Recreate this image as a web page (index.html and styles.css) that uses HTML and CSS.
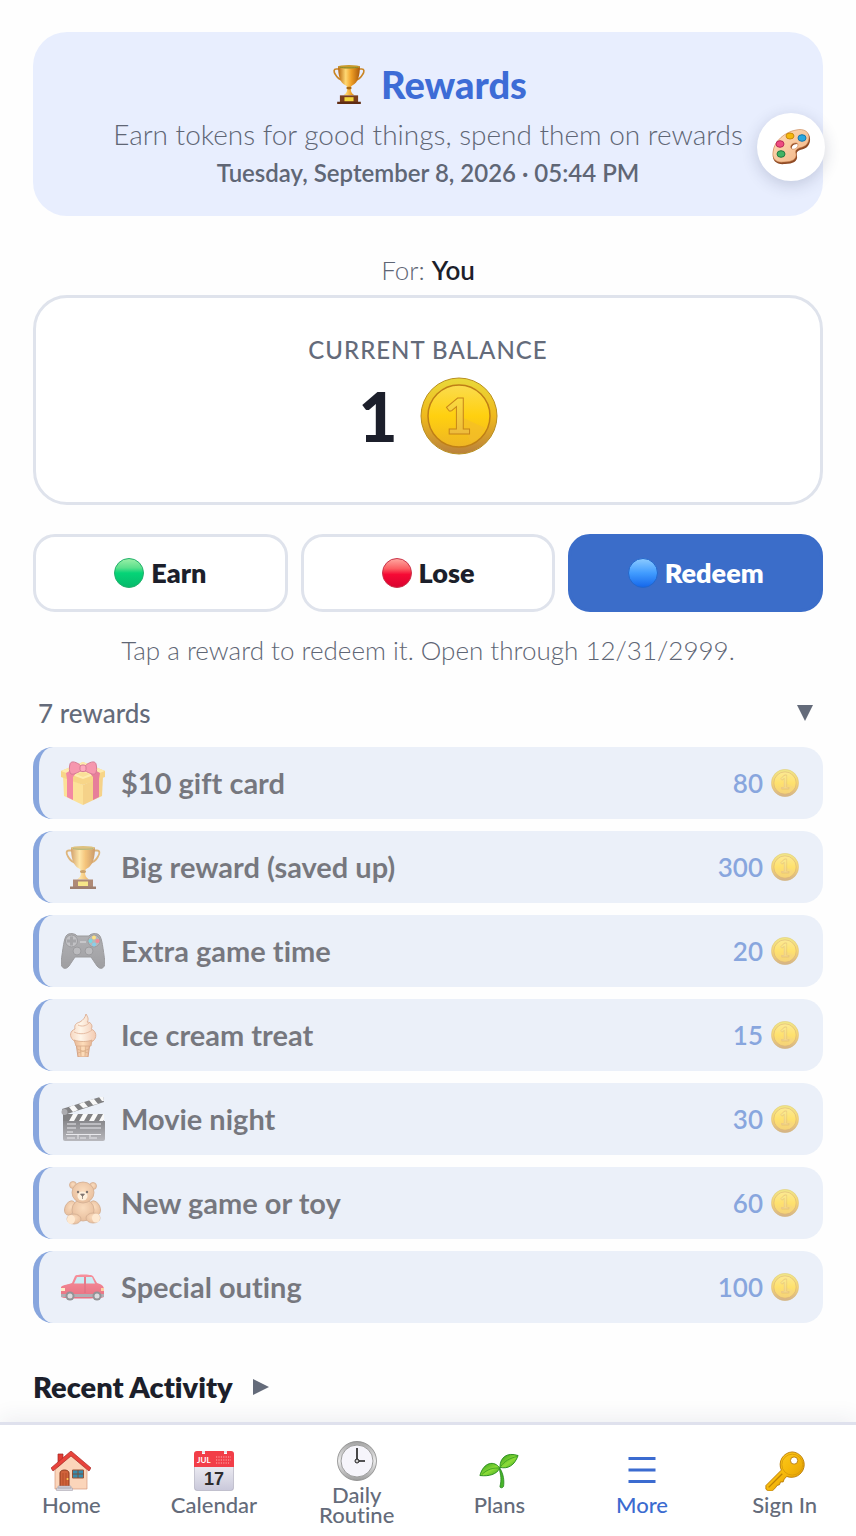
FILE: index.html
```html
<!DOCTYPE html>
<html lang="en">

<head>
    <meta charset="UTF-8">
    <meta name="viewport" content="width=device-width, initial-scale=1.0">
    <title>Rewards</title>
    <link rel="stylesheet" href="styles.css">
</head>

<body>
    <!-- shared icons -->
    <svg class="sprite" width="0" height="0" aria-hidden="true">
        <defs>
            <linearGradient id="gold" x1="0" y1="0" x2="1" y2="0">
                <stop offset="0" stop-color="#b8660c" />
                <stop offset=".35" stop-color="#ffd873" />
                <stop offset=".6" stop-color="#f0a026" />
                <stop offset="1" stop-color="#a9590a" />
            </linearGradient>
            <linearGradient id="coinRim" x1="0" y1="0" x2="0" y2="1">
                <stop offset="0" stop-color="#e9d93a" />
                <stop offset=".5" stop-color="#f0b91c" />
                <stop offset="1" stop-color="#b9803c" />
            </linearGradient>
            <linearGradient id="coinFace" x1="0" y1="0" x2="0" y2="1">
                <stop offset="0" stop-color="#fbdc4e" />
                <stop offset=".5" stop-color="#ffd00f" />
                <stop offset="1" stop-color="#eeb524" />
            </linearGradient>
            <linearGradient id="coinOne" x1="0" y1="0" x2="0" y2="1">
                <stop offset="0" stop-color="#ffe640" />
                <stop offset="1" stop-color="#e9b13a" />
            </linearGradient>
            <linearGradient id="green" x1="0" y1="0" x2="0" y2="1">
                <stop offset="0" stop-color="#9df0a8" />
                <stop offset=".32" stop-color="#5be08c" />
                <stop offset=".5" stop-color="#05d477" />
                <stop offset="1" stop-color="#06b96b" />
            </linearGradient>
            <linearGradient id="red" x1="0" y1="0" x2="0" y2="1">
                <stop offset="0" stop-color="#ffaaa2" />
                <stop offset=".35" stop-color="#fb5e62" />
                <stop offset=".55" stop-color="#f60a35" />
                <stop offset="1" stop-color="#d9022f" />
            </linearGradient>
            <linearGradient id="blue" x1="0" y1="0" x2="0" y2="1">
                <stop offset="0" stop-color="#8ccbff" />
                <stop offset=".5" stop-color="#419cff" />
                <stop offset="1" stop-color="#1466ea" />
            </linearGradient>
            <linearGradient id="pad" x1="0" y1="0" x2="0" y2="1">
                <stop offset="0" stop-color="#7f7f84" />
                <stop offset="1" stop-color="#606065" />
            </linearGradient>
            <linearGradient id="cream" x1="0" y1="0" x2="1" y2="0">
                <stop offset="0" stop-color="#f4c09a" />
                <stop offset=".4" stop-color="#fff0dc" />
                <stop offset="1" stop-color="#eeaa80" />
            </linearGradient>
            <linearGradient id="cone" x1="0" y1="0" x2="1" y2="0">
                <stop offset="0" stop-color="#d98953" />
                <stop offset=".5" stop-color="#ffc98f" />
                <stop offset="1" stop-color="#d5824d" />
            </linearGradient>
            <linearGradient id="slate" x1="0" y1="0" x2="0" y2="1">
                <stop offset="0" stop-color="#3c3c42" />
                <stop offset="1" stop-color="#8a8a93" />
            </linearGradient>
            <radialGradient id="fur" cx=".5" cy=".4" r=".7">
                <stop offset="0" stop-color="#f9c795" />
                <stop offset="1" stop-color="#d58d55" />
            </radialGradient>
            <linearGradient id="carBody" x1="0" y1="0" x2="0" y2="1">
                <stop offset="0" stop-color="#f4485c" />
                <stop offset="1" stop-color="#d9142f" />
            </linearGradient>
            <linearGradient id="paper" x1="0" y1="0" x2="0" y2="1">
                <stop offset="0" stop-color="#ffffff" />
                <stop offset="1" stop-color="#c9c8da" />
            </linearGradient>
            <linearGradient id="steel" x1="0" y1="0" x2="0" y2="1">
                <stop offset="0" stop-color="#a2a2a2" />
                <stop offset=".5" stop-color="#ececec" />
                <stop offset="1" stop-color="#9c9c9c" />
            </linearGradient>
            <linearGradient id="leaf" x1="0" y1="0" x2="1" y2="1">
                <stop offset="0" stop-color="#2d9a1a" />
                <stop offset=".55" stop-color="#8ddc38" />
                <stop offset="1" stop-color="#37a31e" />
            </linearGradient>
            <linearGradient id="keyGold" x1="0" y1="0" x2="1" y2="1">
                <stop offset="0" stop-color="#ffd42a" />
                <stop offset=".5" stop-color="#f6b90b" />
                <stop offset="1" stop-color="#d99300" />
            </linearGradient>
            <linearGradient id="wood" x1="0" y1="0" x2="1" y2="1">
                <stop offset="0" stop-color="#ffdfba" />
                <stop offset="1" stop-color="#f2b283" />
            </linearGradient>
        </defs>

        <symbol id="trophy" viewBox="0 0 44 44">
            <path d="M12 5.500H8c-3 0-3 3-1 6 2 4 5 6 9 6.500M32 5.500h4c3 0 3 3 1 6-2 4-5 6-9 6.500" fill="none" stroke="#c98526" stroke-width="1.800" />
            <path d="M10 2.500h24c0 10-2 18-8 21-2 1-2 2-2 4 0 3 1 5 4 7H16c3-2 4-4 4-7 0-2 0-3-2-4-6-3-8-11-8-21z" fill="url(#gold)" />
            <ellipse cx="22" cy="3" rx="12" ry="2" fill="#c99a2c" />
            <path d="M12 3.500c3 1 17 1 20 0" stroke="#7e8a2d" fill="none" />
            <ellipse cx="22" cy="26.500" rx="3" ry="1.500" fill="#a8670f" />
            <path d="M12 34.500h20V42H12z" fill="#7a3d1c" />
            <path d="M17 36.500h10v4.500H17z" fill="#f2d53a" />
            <path d="M9 41.500h26v2.500H9z" fill="#5f2c12" />
        </symbol>

        <symbol id="coin" viewBox="0 0 78 78">
            <circle cx="39" cy="39" r="38" fill="url(#coinRim)" stroke="#b98f1f" />
            <circle cx="39" cy="39" r="31" fill="url(#coinFace)" stroke="#bf7f16" stroke-width="1.500" />
            <path d="M39 39l26 12a29 29 0 0 1-14 15z" fill="#f3bd2c" opacity=".6" />
        </symbol>

        <symbol id="gift" viewBox="0 0 44 44">
            <path d="M2 15l20 9v20L3 35z" fill="#fbcf55" />
            <path d="M42 15l-20 9v20l19-9z" fill="#f0b53c" />
            <path d="M0 10L22 1l22 9v6l-22 8L0 16z" fill="#f3bb3b" />
            <path d="M0 10L22 1l22 9-22 8z" fill="#ffe07a" />
            <path d="M15 13l7-2 7 2-7 3z" fill="#f9cd55" />
            <path d="M5 12l7-4 4 3-4 5v23l-6-3V18z" fill="#ec3a66" />
            <path d="M39 12l-7-4-4 3 4 5v23l6-3V18z" fill="#d92a58" />
            <path d="M22 7C17 1 10-1 9 3c-1 4-1 8 1 10 3 1 7-2 12-4 5 2 9 5 12 4 2-2 2-6 1-10-1-4-8-2-13 4z" fill="#f2537a" stroke="#bd2550" />
            <rect x="19" y="4" width="6" height="6.500" rx="2" fill="#ff7292" stroke="#bd2550" />
        </symbol>

        <symbol id="gamepad" viewBox="0 0 44 44">
            <path d="M6 6c2-2 8-2 10 1h12c2-3 8-3 10-1 3 2 4 14 6 27 0 7-5 8-8 4l-6-9H14l-6 9c-3 4-8 3-8-4C2 20 3 8 6 6z" fill="url(#pad)" stroke="#5a5a5f" />
            <circle cx="10.500" cy="12" r="6" fill="#99999e" stroke="#5b5b60" />
            <path d="M9 7.500h3v3h3v3h-3v3H9v-3H6v-3h3z" fill="#6b6b70" />
            <circle cx="33" cy="12" r="6" fill="#88888d" stroke="#5b5b60" />
            <circle cx="33" cy="8.500" r="2" fill="#ffd12e" />
            <circle cx="29.500" cy="12" r="2" fill="#1fc0d0" />
            <circle cx="36.500" cy="12" r="2" fill="#ef3f4f" />
            <circle cx="33" cy="15.500" r="2" fill="#39b3de" />
            <circle cx="16" cy="22" r="4" fill="#8f8f94" stroke="#5b5b60" />
            <circle cx="28" cy="22" r="4" fill="#8f8f94" stroke="#5b5b60" />
            <path d="M19 12h6v2h-6z" fill="#a1a1a6" />
        </symbol>

        <symbol id="icecream" viewBox="0 0 44 44">
            <path d="M15 30h14l-2 14H17z" fill="url(#cone)" stroke="#b8683a" />
            <path d="M19 31l1 12M25 31l-1 12M16 36l11 4M28 36l-11 4" fill="none" stroke="#c47b3b" stroke-width=".8" />
            <path d="M25 1c2 3 3 6 1 8 5 0 6 5 4 7 6 2 6 9 2 12-4 2-16 2-20-1-4-4-3-9 2-11-1-4 1-6 5-7 3-2 5-4 6-8z" fill="url(#cream)" stroke="#cb8259" />
            <path d="M17 12c4 2 8 1 11-2M13 19c6 3 13 2 18-2" fill="none" stroke="#d79268" />
            <path d="M13 27c6 2 13 2 18 0l-1 6H15z" fill="url(#cone)" stroke="#c1743e" stroke-width=".8" />
        </symbol>

        <symbol id="clapper" viewBox="0 0 44 44">
            <path d="M1 12L42-1l1 6L3 18z" fill="#303034" />
            <path d="M8 10l5-2 4 5-5 2zM18 7l5-2 4 5-5 1zM28 3l5-1 4 5-5 1zM38 0l4-1 1 5-2 0z" fill="#f7f7f7" />
            <path d="M2 17h41v7H2z" fill="#303034" />
            <path d="M12 17h5l-4 7H8zM22 17h5l-4 7h-5zM32 17h5l-4 7h-5zM42 17h1v6l-1 1h-4z" fill="#f7f7f7" />
            <path d="M2 24h42v18a2 2 0 0 1-2 2H4a2 2 0 0 1-2-2z" fill="url(#slate)" />
            <path d="M6 27h9M6 31h9M6 35h6M19 27h21M19 31h21M5 37.500h35M6 41h8M19 41h6M30 41h6M17 38v4M29 38v4" stroke="#dcdce2" stroke-width="1" />
            <circle cx="3.500" cy="15" r="3" fill="#77777d" />
        </symbol>

        <symbol id="teddy" viewBox="0 0 44 44">
            <g fill="url(#fur)" stroke="#b77a4b" stroke-width=".8">
                <circle cx="12" cy="4" r="3.500" />
                <circle cx="32" cy="5" r="3.500" />
                <ellipse cx="9" cy="27" rx="5" ry="7.500" transform="rotate(25 9 27)" />
                <ellipse cx="34" cy="27" rx="5" ry="7.500" transform="rotate(-25 34 27)" />
                <ellipse cx="22" cy="29" rx="11" ry="11" />
                <ellipse cx="22" cy="11.500" rx="11" ry="10.500" />
                <ellipse cx="13" cy="38" rx="7" ry="5" />
                <ellipse cx="32" cy="37" rx="7" ry="5" />
            </g>
            <ellipse cx="10" cy="38.500" rx="4" ry="4.500" fill="#ffdcb4" />
            <ellipse cx="35" cy="37" rx="4" ry="4.500" fill="#ffdcb4" />
            <ellipse cx="21.500" cy="15" rx="5" ry="4.500" fill="#ffe7c8" />
            <circle cx="17" cy="11" r="1.200" fill="#2b1a12" />
            <circle cx="26" cy="11" r="1.200" fill="#2b1a12" />
            <path d="M19.500 13h4l-2 2.500zM21.500 15v3" fill="#2b1a12" stroke="#2b1a12" stroke-width=".7" />
        </symbol>

        <symbol id="car" viewBox="0 0 44 44">
            <path d="M0 22c3-3 7-2 11-4l3-7c1-2 16-2 18 0l4 7c4 1 7 3 7 6v8c-2 2-41 2-43 0z" fill="url(#carBody)" />
            <path d="M13 18.500l3-6.500h7v6.500zM25 12h6l3 6.500h-9z" fill="#a9e3f0" />
            <path d="M24 12v16" stroke="#b80d29" stroke-width=".8" />
            <path d="M0 23h4v3H0z" fill="#ffe5a5" />
            <path d="M40 23h3v3h-3z" fill="#ffb36b" />
            <path d="M0 29h43v3H0z" fill="#7e7882" />
            <circle cx="9" cy="31" r="4.500" fill="#4d4d52" />
            <circle cx="9" cy="31" r="2.500" fill="#c7c7cc" />
            <circle cx="36" cy="31" r="4.500" fill="#4d4d52" />
            <circle cx="36" cy="31" r="2.500" fill="#c7c7cc" />
        </symbol>

        <symbol id="palette" viewBox="0 0 40 40">
            <path d="M25 4c8-2 15 2 14 10-1 6-5 8-10 9-3 1-4 3-3 6 1 5-4 8-12 8-8 1-13-3-12-10C3 15 14 6 25 4zm1 13c-4 0-6 3-5 5 2 3 7 0 7-3 0-1-1-2-2-2z" fill="#8f4a24" fill-rule="evenodd" />
            <path d="M25 3c8-2 14 2 13 9-1 6-5 8-10 9-3 1-4 3-3 6 1 5-4 8-12 8-8 1-12-3-11-10C3 14 14 5 25 3zm0 13c-4 0-6 3-5 5 2 3 7 0 7-3 0-1-1-2-2-2z" fill="url(#wood)" fill-rule="evenodd" stroke="#c67d4b" stroke-width=".6" />
            <ellipse cx="19" cy="9" rx="4" ry="3" fill="#f5b80c" stroke="#c98a0b" />
            <ellipse cx="31" cy="11" rx="4" ry="3.300" fill="#2ba7de" stroke="#1577ad" />
            <ellipse cx="9" cy="17" rx="4" ry="3.300" fill="#ee4c81" stroke="#bb2859" />
            <ellipse cx="10" cy="27" rx="4" ry="3.300" fill="#42b364" stroke="#237a40" />
        </symbol>

        <symbol id="home" viewBox="0 0 40 40">
            <path d="M7 3h5v9l-5 5z" fill="#e23b33" stroke="#a12722" stroke-width=".7" />
            <path d="M20 4l16 15v19H4V19z" fill="#fbd5ba" stroke="#d59a7c" stroke-width=".7" />
            <path d="M20 0l20 17-2 3L20 5 2 20l-2-3z" fill="#e8433b" stroke="#a92b26" stroke-width=".7" />
            <path d="M9 36V22c0-4 9-4 9 0v14z" fill="#d0623b" stroke="#8d3a1e" />
            <path d="M12 22v13M15 22v13" stroke="#a94723" stroke-width=".7" />
            <circle cx="16.500" cy="28" r="1" fill="#ffd257" />
            <path d="M21.500 19h11v8h-11z" fill="#388bac" stroke="#9b5436" />
            <path d="M27 19v8M21 23h12" stroke="#76533f" />
            <path d="M7 35h13v2H7zM5.500 37h16v2.500h-16z" fill="#d8d6de" stroke="#9e9ba6" stroke-width=".5" />
        </symbol>

        <symbol id="clock" viewBox="0 0 40 40">
            <circle cx="20" cy="20" r="19.500" fill="url(#steel)" stroke="#888" stroke-width=".8" />
            <circle cx="20" cy="20" r="16" fill="#f6f5fb" stroke="#9d9d9d" />
            <path d="M20 7v13h8" fill="none" stroke="#1e1e1e" stroke-width="1.600" />
            <circle cx="20" cy="20" r="2" fill="#ccc" stroke="#1e1e1e" />
        </symbol>

        <symbol id="sprout" viewBox="0 0 44 40">
            <path d="M23 17c4 6 5 14 4 20-1 2-4 2-4 0 2-7 1-13-1-20z" fill="#47b52a" stroke="#1f7f16" stroke-width=".8" />
            <path d="M23 17C17 8 5 10 1 25c10 1 18-1 22-8z" fill="url(#leaf)" stroke="#238a18" />
            <path d="M23 16C23 5 31-1 43 3c-4 11-11 15-20 13z" fill="url(#leaf)" stroke="#238a18" />
            <path d="M3 24c6-6 13-8 20-7M24 15c4-6 10-9 18-11" fill="none" stroke="#2f961e" stroke-width=".8" />
        </symbol>

        <symbol id="menu" viewBox="0 0 40 40">
            <path d="M6.500 7.500h27M6.500 19h27M6.500 30.500h27" stroke="#3b6bd0" stroke-width="3" />
        </symbol>

        <symbol id="key" viewBox="0 0 44 44">
            <path d="M30 1a14 14 0 1 1-6 27l-3 3-1 3-3 0-1 3-3 1-1 2-3 3c-2 2-6 1-8-1v-4l17-17A14 14 0 0 1 30 1zm2 5.500a4 4 0 1 0 0 8 4 4 0 0 0 0-8z" fill="url(#keyGold)" fill-rule="evenodd" stroke="#b87b05" />
            <path d="M19 25L4 40" stroke="#bd8206" stroke-width="1.500" />
            <circle cx="30" cy="15" r="11.500" fill="none" stroke="#d99c08" />
        </symbol>
    </svg>

    <button class="theme-btn" aria-label="Change theme"><svg class="icon-md"><use href="#palette" /></svg></button>

    <main class="page">
        <header class="hero">
            <h1><svg class="icon-md" aria-hidden="true"><use href="#trophy" /></svg>Rewards</h1>
            <p class="tagline">Earn tokens for good things, spend them on rewards</p>
            <p class="today">Tuesday, September 8, 2026 · 05:44 PM</p>
        </header>

        <p class="for-line">For: <strong>You</strong></p>
        <section class="balance">
            <h2>Current balance</h2>
            <div class="amount">1 <svg class="coin" viewBox="0 0 78 78" aria-hidden="true"><use href="#coin" /><text x="38" y="57">1</text></svg></div>
        </section>

        <div class="modes">
            <button><svg class="dot" viewBox="0 0 30 30" aria-hidden="true"><circle cx="15" cy="15" r="14.500" fill="url(#green)" stroke="#23b06c" /></svg>Earn</button>
            <button><svg class="dot" viewBox="0 0 30 30" aria-hidden="true"><circle cx="15" cy="15" r="14.500" fill="url(#red)" stroke="#c9364c" /></svg>Lose</button>
            <button class="active"><svg class="dot" viewBox="0 0 30 30" aria-hidden="true"><circle cx="15" cy="15" r="14.500" fill="url(#blue)" stroke="#2467cb" /></svg>Redeem</button>
        </div>
        <p class="hint">Tap a reward to redeem it. Open through 12/31/2999.</p>

        <details class="rewards" open>
            <summary>7 rewards <svg class="arrow" viewBox="0 0 16 16" aria-hidden="true"><path d="M0 0h16L8 16z" /></svg></summary>
            <div class="reward-list">
                <button class="reward" disabled><svg class="icon-lg"><use href="#gift" /></svg><span class="name">$10 gift card</span><span class="cost">80 <svg class="coin" viewBox="0 0 78 78"><use href="#coin" /><text x="38" y="57">1</text></svg></span></button>
                <button class="reward" disabled><svg class="icon-lg"><use href="#trophy" /></svg><span class="name">Big reward (saved up)</span><span class="cost">300 <svg class="coin" viewBox="0 0 78 78"><use href="#coin" /><text x="38" y="57">1</text></svg></span></button>
                <button class="reward" disabled><svg class="icon-lg"><use href="#gamepad" /></svg><span class="name">Extra game time</span><span class="cost">20 <svg class="coin" viewBox="0 0 78 78"><use href="#coin" /><text x="38" y="57">1</text></svg></span></button>
                <button class="reward" disabled><svg class="icon-lg"><use href="#icecream" /></svg><span class="name">Ice cream treat</span><span class="cost">15 <svg class="coin" viewBox="0 0 78 78"><use href="#coin" /><text x="38" y="57">1</text></svg></span></button>
                <button class="reward" disabled><svg class="icon-lg"><use href="#clapper" /></svg><span class="name">Movie night</span><span class="cost">30 <svg class="coin" viewBox="0 0 78 78"><use href="#coin" /><text x="38" y="57">1</text></svg></span></button>
                <button class="reward" disabled><svg class="icon-lg"><use href="#teddy" /></svg><span class="name">New game or toy</span><span class="cost">60 <svg class="coin" viewBox="0 0 78 78"><use href="#coin" /><text x="38" y="57">1</text></svg></span></button>
                <button class="reward" disabled><svg class="icon-lg"><use href="#car" /></svg><span class="name">Special outing</span><span class="cost">100 <svg class="coin" viewBox="0 0 78 78"><use href="#coin" /><text x="38" y="57">1</text></svg></span></button>
            </div>
        </details>

        <details class="activity">
            <summary>Recent Activity <svg class="arrow" viewBox="0 0 16 16" aria-hidden="true"><path d="M0 0l16 8-16 8z" /></svg></summary>
        </details>
    </main>

    <nav class="tabbar">
        <a href="#"><svg class="icon-md"><use href="#home" /></svg><span>Home</span></a>
        <a href="#">
            <svg class="icon-md" viewBox="0 0 40 40">
                <rect x=".5" y="1" width="39" height="38.500" rx="2.500" fill="url(#paper)" stroke="#a9a8b8" stroke-width=".6" />
                <path d="M0 16V3a3 3 0 0 1 3-3h5v3h3V0h19v3h3V0h4a3 3 0 0 1 3 3v13z" fill="#f23e48" />
                <path d="M22 6h15M22 9h15M22 12h13" stroke="#ffb0b0" stroke-width="1.200" stroke-dasharray="1.200 1.200" />
                <text class="cal-month" x="3" y="12">JUL</text>
                <text class="cal-day" x="20" y="34">17</text>
            </svg>
            <span>Calendar</span>
        </a>
        <a href="#"><svg class="icon-md"><use href="#clock" /></svg><span>Daily<br>Routine</span></a>
        <a href="#"><svg class="icon-md"><use href="#sprout" /></svg><span>Plans</span></a>
        <a href="#" class="current"><svg class="icon-md"><use href="#menu" /></svg><span>More</span></a>
        <a href="#"><svg class="icon-md"><use href="#key" /></svg><span>Sign In</span></a>
    </nav>
</body>

</html>
```

FILE: styles.css
```css
* {
    box-sizing: border-box;
    margin: 0;
    padding: 0;
}

body {
    display: flex;
    flex-direction: column;
    min-height: 100vh;
    background-color: #fefefe;
    color: #1c1f2b;
    font-family: Lato, sans-serif;
    font-size: 26px;
    font-variant-ligatures: none;
    line-height: 36px;
}

button {
    font: inherit;
    font-variant-ligatures: none;
    color: inherit;
    border: none;
    cursor: pointer;
}

svg {
    display: block;
    flex-shrink: 0;
}

.sprite {
    position: absolute;
}

.icon-md {
    width: 40px;
    height: 40px;
}

.icon-lg {
    width: 44px;
    height: 44px;
}

.coin text {
    fill: url(#coinOne);
    stroke: #c8861a;
    stroke-width: 1px;
    font: 900 50px Lato, sans-serif;
    text-anchor: middle;
}

.cal-month {
    fill: #fff;
    font: 700 8px Lato, sans-serif;
}

.cal-day {
    fill: #2c2c2e;
    font: 700 18px "Liberation Sans", sans-serif;
    text-anchor: middle;
}

.page {
    padding: 32px 33px 16px;
}

/* header */
.hero {
    padding: 28px;
    border-radius: 34px;
    background-color: #e8eefe;
    color: #5f6675;
    text-align: center;
}

.hero h1 {
    display: flex;
    justify-content: center;
    align-items: center;
    gap: 12px;
    margin-bottom: 8px;
    color: #3d6cd6;
    font-size: 38px;
    font-weight: 900;
    line-height: 48px;
}

.tagline {
    font-size: 28px;
    font-weight: 300;
}

.today {
    margin-top: 6px;
    font-size: 24px;
    font-weight: 600;
    line-height: 30px;
}

.theme-btn {
    position: fixed;
    top: 113px;
    right: 31px;
    display: flex;
    justify-content: center;
    align-items: center;
    width: 68px;
    height: 68px;
    border-radius: 50%;
    background-color: #fff;
    box-shadow: 0 4px 16px rgba(40, 50, 90, 0.2);
}

/* balance */
.for-line {
    margin: 36px 0 7px;
    color: #5f6675;
    font-weight: 300;
    text-align: center;
}

.for-line strong {
    color: #1c1f2b;
    font-weight: 600;
}

.balance {
    padding: 37px 20px 44px;
    border: 3px solid #dfe3ec;
    border-radius: 34px;
    background-color: #fff;
    text-align: center;
}

.balance h2 {
    margin-bottom: 9px;
    color: #646b7a;
    font-size: 24px;
    font-weight: 500;
    line-height: 30px;
    letter-spacing: 1px;
    text-transform: uppercase;
}

.amount {
    display: flex;
    justify-content: center;
    align-items: center;
    gap: 22px;
    font-size: 68px;
    font-weight: 900;
    line-height: 84px;
}

.amount svg {
    width: 78px;
    height: 78px;
}

/* mode buttons */
.modes {
    display: flex;
    gap: 13px;
    margin: 29px 0 20px;
}

.modes button {
    display: flex;
    flex: 1;
    justify-content: center;
    align-items: center;
    gap: 7px;
    height: 78px;
    border: 3px solid #dfe3ec;
    border-radius: 22px;
    background-color: #fff;
    font-size: 27px;
    font-weight: 800;
}

.modes .active {
    border-color: #3b6dc9;
    background-color: #3b6dc9;
    color: #fff;
}

.dot {
    width: 30px;
    height: 30px;
}

.hint {
    color: #5f6675;
    font-weight: 300;
    text-align: center;
}

/* rewards list */
summary {
    display: flex;
    align-items: center;
    list-style: none;
    cursor: pointer;
}

.arrow {
    width: 16px;
    height: 16px;
    fill: #646b7a;
}

.rewards {
    margin-top: 30px;
}

.rewards summary {
    justify-content: space-between;
    padding: 0 10px 0 5px;
    color: #646b7a;
    font-weight: 500;
    line-height: 30px;
}

.reward-list {
    display: flex;
    flex-direction: column;
    gap: 12px;
    margin-top: 19px;
}

.reward {
    display: flex;
    align-items: center;
    gap: 16px;
    height: 72px;
    padding: 0 24px 0 22px;
    border-left: 6px solid #3b6dc9;
    border-radius: 20px;
    background-color: #dfe8f6;
    text-align: left;
}

.reward:disabled {
    opacity: 0.6;
    cursor: default;
}

.name {
    flex: 1;
    font-size: 29px;
    font-weight: 700;
}

.cost {
    display: flex;
    align-items: center;
    gap: 8px;
    color: #3b6dc9;
    font-weight: 600;
}

.cost svg {
    width: 28px;
    height: 28px;
}

.activity {
    margin-top: 46px;
}

.activity summary {
    gap: 20px;
    font-size: 29px;
    font-weight: 800;
}

/* bottom navigation */
.tabbar {
    position: sticky;
    bottom: 0;
    display: flex;
    margin-top: auto;
    padding: 16px 0 11px;
    border-top: 3px solid #dfe1ed;
    background-color: #fff;
    box-shadow: 0 -4px 20px rgba(40, 50, 90, 0.08);
}

.tabbar a {
    display: flex;
    flex: 1;
    flex-direction: column;
    justify-content: center;
    align-items: center;
    gap: 4px;
    color: #646b7a;
    font-size: 22px;
    font-weight: 500;
    line-height: 20px;
    text-align: center;
    text-decoration: none;
}

.tabbar .current {
    color: #3b6bd0;
}
```
